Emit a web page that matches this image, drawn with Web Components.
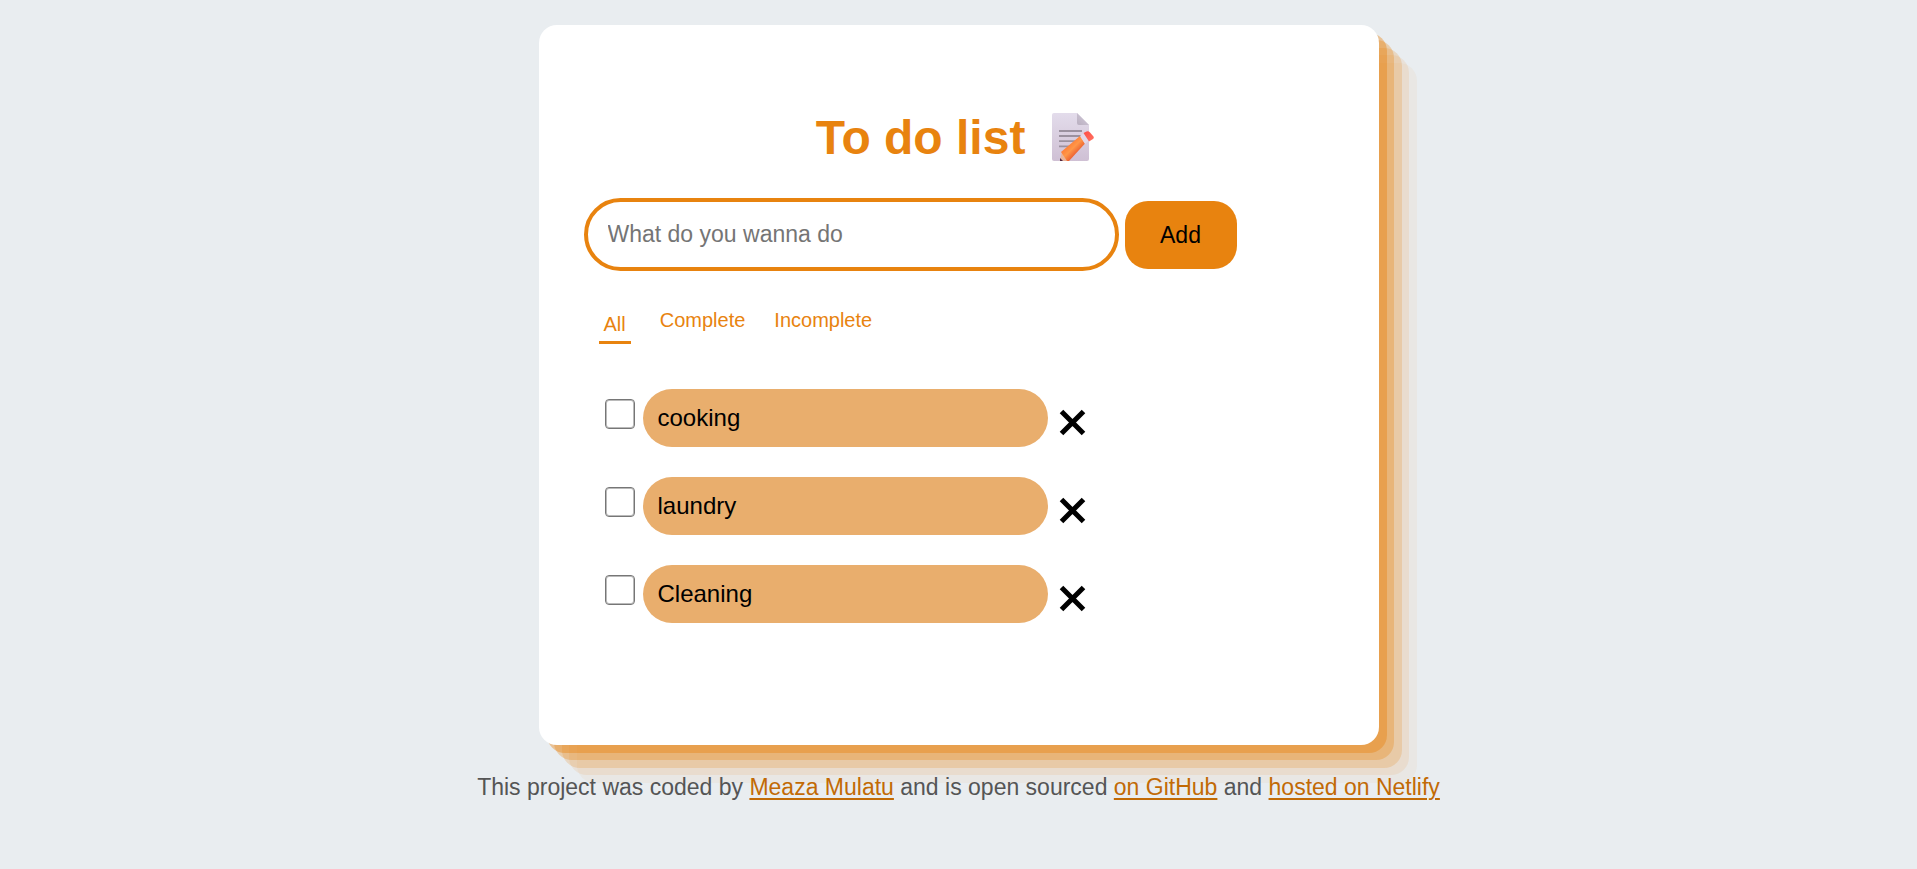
<!DOCTYPE html>
<html lang="en">
<head>
<meta charset="utf-8">
<meta name="viewport" content="width=device-width, initial-scale=1">
<title>To do list</title>
<style>
  body { margin: 0; background: #e9edf0; font-family: "Liberation Sans", Arial, sans-serif; --accent: #e8830f; }
</style>
</head>
<body>
<todo-app></todo-app>

<template id="app-template">
  <style>
    :host { display: flex; flex-direction: column; align-items: center; padding: 25px 16px; }
    main {
      box-sizing: border-box; width: 100%; max-width: 840px; padding: 84px 45px 122px;
      background: #fff; border-radius: 18px;
      box-shadow: 8px 8px rgba(232,131,15,.4), 15px 15px rgba(232,131,15,.3),
        23px 23px rgba(232,131,15,.2), 30px 30px rgba(232,131,15,.1), 38px 38px rgba(232,131,15,.05);
    }
    h1 { display: flex; align-items: center; justify-content: center; gap: 24px; margin: 0;
      font-size: 48px; line-height: 58px; color: var(--accent); }
    todo-form { margin-top: 31px; }
    todo-filters { margin: 36px 15px 0; }
    .list { display: flex; flex-direction: column; gap: 30px; margin: 45px 21px 0; }
    footer { margin-top: 28px; font-size: 23px; line-height: 28px; color: #555; text-align: center; }
    footer a { color: #c26a05; text-decoration-thickness: 2px; text-underline-offset: 3px; }
  </style>
  <main>
    <h1>To do list <memo-icon></memo-icon></h1>
    <todo-form></todo-form>
    <todo-filters></todo-filters>
    <div class="list">
      <todo-item>cooking</todo-item>
      <todo-item>laundry</todo-item>
      <todo-item>Cleaning</todo-item>
    </div>
  </main>
  <footer>This project was coded by <a href="#author">Meaza Mulatu</a> and is open sourced <a href="#github">on GitHub</a> and <a href="#netlify">hosted on Netlify</a></footer>
</template>

<template id="form-template">
  <style>
    :host { display: block; }
    form { display: flex; align-items: center; gap: 6px; }
    input, button { box-sizing: border-box; font: 23px/28px "Liberation Sans", Arial, sans-serif; margin: 0; }
    input { flex: 0 1 535px; min-width: 0; height: 73px; padding: 0 20px; border: 4px solid var(--accent); border-radius: 37px; background: #fff; outline: none; }
    input::placeholder { color: #757575; }
    button { width: 112px; height: 68px; padding: 0; border: 0; border-radius: 23px; background: var(--accent); color: #000; }
  </style>
  <form>
    <input type="text" aria-label="New task" placeholder="What do you wanna do">
    <button type="button">Add</button>
  </form>
</template>

<template id="filters-template">
  <style>
    :host { display: block; }
    nav { display: flex; align-items: flex-start; gap: 29px; }
    button { padding: 0; border: 0; background: none; color: var(--accent); font: 20px/26px "Liberation Sans", Arial, sans-serif; }
    button[aria-pressed="true"] { padding: 4px 5px; border-bottom: 3px solid var(--accent); }
  </style>
  <nav aria-label="Filter tasks">
    <button type="button" aria-pressed="true">All</button>
    <button type="button">Complete</button>
    <button type="button">Incomplete</button>
  </nav>
</template>

<template id="item-template">
  <style>
    :host { display: flex; align-items: center; }
    input { appearance: none; box-sizing: border-box; flex: none; width: 30px; height: 30px; margin: 0 8px 8px 0;
      border: 1px solid #767676; border-radius: 4px; background: #fff; box-shadow: inset 0 0 0 1px #bababa; }
    input:checked { background: #e8830f; }
    label { box-sizing: border-box; flex: 0 1 405px; padding: 15px; line-height: 28px; font-size: 24px; border-radius: 29px; background: #e9ae6d; color: #000; }
    button { flex: none; display: flex; margin: 8px 0 0 10px; padding: 0; border: 0; background: none; }
  </style>
  <input type="checkbox" id="done">
  <label for="done"><slot></slot></label>
  <button type="button" aria-label="Delete task">
    <svg width="29" height="29" viewBox="0 0 29 29"><path d="M3.500 3.500 25.500 25.500M25.500 3.500 3.500 25.500" stroke="#000" stroke-width="5" fill="none"/></svg>
  </button>
</template>

<template id="memo-template">
  <style>:host { display: block; width: 52px; height: 52px; } svg { display: block; }</style>
  <svg width="48" height="50" viewBox="0 0 48 50" aria-hidden="true">
    <defs>
      <linearGradient id="paper" x1="0" y1="0" x2="0" y2="1"><stop stop-color="#e3dceb"/><stop offset="1" stop-color="#cfc0d4"/></linearGradient>
      <linearGradient id="fold" x1="0" y1="1" x2="1" y2="0"><stop stop-color="#b9afc0"/><stop offset="1" stop-color="#d5cddc"/></linearGradient>
      <linearGradient id="wood" gradientUnits="userSpaceOnUse" x1="19" y1="32" x2="28" y2="41"><stop stop-color="#ff7c35"/><stop offset=".5" stop-color="#ff9748"/><stop offset="1" stop-color="#ed6232"/></linearGradient>
      <linearGradient id="rubber" gradientUnits="userSpaceOnUse" x1="36" y1="20" x2="43" y2="28"><stop stop-color="#ff5149"/><stop offset="1" stop-color="#ff6e5f"/></linearGradient>
      <clipPath id="base"><path d="M0 0H48V49H0Z"/></clipPath>
    </defs>
    <path d="M5 1H28L40 13V47Q40 49 38 49H5Q3 49 3 47V3Q3 1 5 1Z" fill="url(#paper)"/>
    <path d="M28 1V11Q28 13 30 13H40Z" fill="url(#fold)"/>
    <path d="M10 19H33M10 24H33M10 29.200H28M10 34.300H23" stroke="#9b919f" stroke-width="1.800"/>
    <g clip-path="url(#base)">
      <path d="M13 40 20 49 10 52Z" fill="#e8b49c"/>
      <path d="M11 46 15 50H11Z" fill="#522840"/>
      <path d="M12 40 31 24 36 31.500 20 49H18Z" fill="url(#wood)"/>
      <path d="M31 24 34.500 21 40 28.500 36 32Z" fill="#e2d8e9"/>
      <path d="M34.500 21 37.500 19.500Q39.500 18.500 41 20.500L44.500 24.500Q45.500 26 44 27L40 29.500Z" fill="url(#rubber)"/>
    </g>
  </svg>
</template>

<script>
  const define = (name, templateId) => customElements.define(name, class extends HTMLElement {
    constructor() {
      super();
      this.attachShadow({ mode: 'open' }).append(document.getElementById(templateId).content.cloneNode(true));
    }
  });
  define('memo-icon', 'memo-template');
  define('todo-form', 'form-template');
  define('todo-filters', 'filters-template');
  define('todo-item', 'item-template');
  define('todo-app', 'app-template');
</script>
</body>
</html>
